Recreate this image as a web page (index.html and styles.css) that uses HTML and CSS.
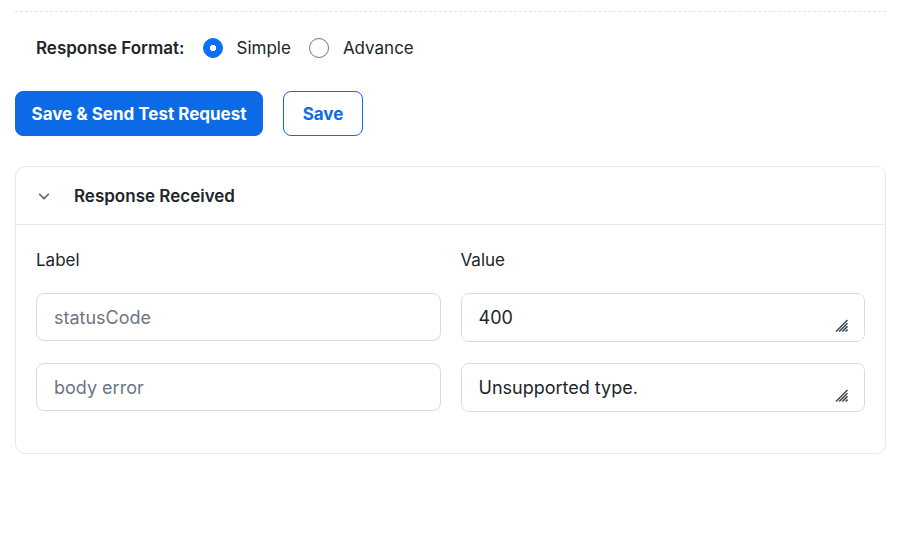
FILE: index.html
```html
<!DOCTYPE html>
<html lang="en">
  <head>
    <meta charset="UTF-8" />
    <meta name="viewport" content="width=device-width, initial-scale=1.0" />
    <title>Webhook Test</title>
    <link rel="stylesheet" href="styles.css">
  </head>
  <body>
    <div class="page">
      <hr class="divider" />

      <div class="format-row">
        <span class="format-label">Response Format:</span>
        <label class="radio">
          <input type="radio" name="format" checked />
          <span>Simple</span>
        </label>
        <label class="radio">
          <input type="radio" name="format" />
          <span>Advance</span>
        </label>
      </div>

      <div class="actions">
        <button class="btn btn-primary">Save &amp; Send Test Request</button>
        <button class="btn btn-outline">Save</button>
      </div>

      <div class="card">
        <div class="card-header">
          <svg class="chevron" width="14" height="14" viewBox="0 0 16 16">
            <path d="M3 6l5 5 5-5" fill="none" stroke="#5f6b7a" stroke-width="2" stroke-linecap="round" stroke-linejoin="round" />
          </svg>
          <span class="card-title">Response Received</span>
        </div>
        <div class="card-body">
          <div class="field-grid">
            <div class="col-label">Label</div>
            <div class="col-label">Value</div>
            <input class="field" type="text" placeholder="statusCode" />
            <div class="area-wrap">
              <textarea class="field field-area" rows="1">400</textarea>
              <svg class="grip" width="13" height="13" viewBox="0 0 13 13">
                <path d="M12.5 1L1 12.5M12.5 4.2L4.2 12.5M12.5 7.4L7.4 12.5M12.5 10.6L10.6 12.5" stroke="#3f4853" stroke-width="1.5" />
              </svg>
            </div>
            <input class="field" type="text" placeholder="body error" />
            <div class="area-wrap">
              <textarea class="field field-area" rows="1">Unsupported type.</textarea>
              <svg class="grip" width="13" height="13" viewBox="0 0 13 13">
                <path d="M12.5 1L1 12.5M12.5 4.2L4.2 12.5M12.5 7.4L7.4 12.5M12.5 10.6L10.6 12.5" stroke="#3f4853" stroke-width="1.5" />
              </svg>
            </div>
          </div>
        </div>
      </div>
    </div>
  </body>
</html>
```

FILE: styles.css
```css
* {
  margin: 0;
  padding: 0;
  box-sizing: border-box;
}

body {
  background-color: #ffffff;
  color: #212529;
  font-family: "Inter", "Liberation Sans", sans-serif;
  font-size: 17px;
}

.page {
  width: 871px;
  margin-left: 15px;
}

.divider {
  border: none;
  border-top: 1px dashed #e1e4e8;
  margin-top: 11px;
}

.format-row {
  display: flex;
  align-items: center;
  height: 24px;
  margin-top: 24px;
  padding-left: 21px;
}

.format-label {
  font-weight: 600;
  margin-right: 18px;
}

.radio {
  display: flex;
  align-items: center;
  gap: 14px;
  margin-right: 18px;
  cursor: pointer;
}

.radio input {
  appearance: none;
  width: 20px;
  height: 20px;
  border: 1.5px solid #6c757d;
  border-radius: 50%;
  background-color: #fff;
}

.radio input:checked {
  border-color: #0d6efd;
  background-color: #0d6efd;
  background-image: radial-gradient(circle, #fff 0 3px, transparent 3.5px);
}

.actions {
  display: flex;
  gap: 20px;
  margin-top: 31px;
}

.btn {
  height: 45px;
  padding: 0 14px;
  border-radius: 8px;
  font-family: inherit;
  font-size: 17px;
  font-weight: 700;
  cursor: pointer;
}

.btn-primary {
  width: 248px;
  background-color: #0d6ae6;
  border: 1px solid #0d6ae6;
  color: #fff;
}

.btn-outline {
  width: 80px;
  background-color: #fff;
  border: 1px solid #0d6ae6;
  color: #0d6ae6;
}

.card {
  margin-top: 30px;
  border: 1px solid #e5e7eb;
  border-radius: 10px;
}

.card-header {
  display: flex;
  align-items: center;
  height: 58px;
  padding-left: 21px;
  border-bottom: 1px solid #e5e7eb;
}

.chevron {
  margin-right: 23px;
}

.card-title {
  font-weight: 600;
}

.card-body {
  padding: 25px 20px 41px;
}

.field-grid {
  display: grid;
  grid-template-columns: 1fr 1fr;
  column-gap: 20px;
  row-gap: 21px;
}

.col-label {
  font-weight: 400;
  margin-bottom: 2px;
}

.field {
  width: 100%;
  height: 48px;
  padding: 0 17px;
  border: 1px solid #d7dbe0;
  border-radius: 8px;
  font-family: inherit;
  font-size: 18px;
  color: #212529;
  outline: none;
}

.field::placeholder {
  color: #6c7683;
}

.area-wrap {
  position: relative;
}

.field-area {
  display: block;
  height: 49px;
  padding: 12px 17px;
  line-height: 24px;
  resize: none;
}

.grip {
  position: absolute;
  right: 17px;
  bottom: 10px;
  pointer-events: none;
}
```
